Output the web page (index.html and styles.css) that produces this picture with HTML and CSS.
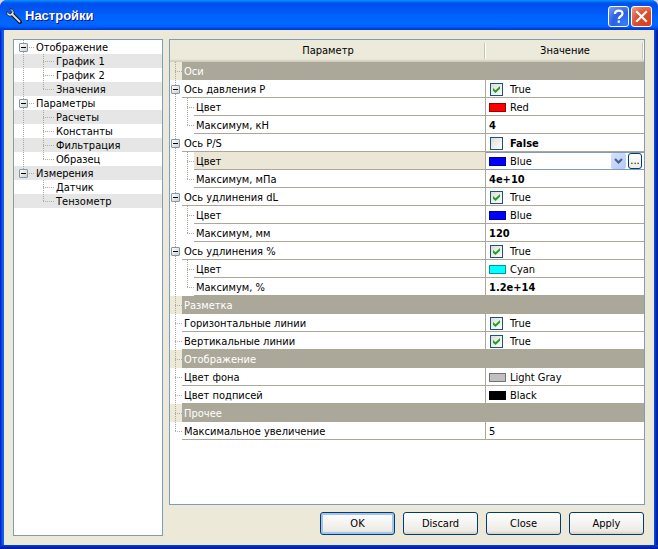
FILE: index.html
```html
<!DOCTYPE html>
<html lang="ru">
<head>
<meta charset="utf-8">
<title>Настройки</title>
<link rel="stylesheet" href="styles.css">
</head>
<body>
<div class="window">
  <header class="titlebar">
    <svg class="wrench" width="16" height="16" viewBox="0 0 16 16" aria-hidden="true">
      <path d="M6 6l8 8" stroke="#10182c" stroke-width="4" stroke-linecap="round"/>
      <path d="M3.500 1l2.500 2.500-.5 2-2 .5L1 3.500c-.6 2 .2 4 2 4.500 2 .6 4.500-1 5-3C8.300 3 6 .3 3.500 1z" fill="#f4f4ee" stroke="#10182c" stroke-width=".8"/>
      <path d="M6 6l7.500 7.500" stroke="#d8dcd8" stroke-width="1.800" stroke-linecap="round"/>
    </svg>
    <h1>Настройки</h1>
    <button class="cap help" aria-label="Справка">
      <svg width="19" height="19" viewBox="0 0 19 19"><path d="M6 7c0-4.500 7.500-4.500 7.500-.5 0 3-3.700 2.500-3.700 5.500M9.800 13.500v2.300" fill="none" stroke="#fff" stroke-width="2.200"/></svg>
    </button>
    <button class="cap close" aria-label="Закрыть">
      <svg width="19" height="19" viewBox="0 0 19 19"><path d="M5 5l9 9M14 5l-9 9" stroke="#fff" stroke-width="2.200" stroke-linecap="square"/></svg>
    </button>
  </header>
  <main class="client">
    <nav class="tree">
      <ul>
        <li><i class="g trunk"><button class="box" aria-label="Свернуть"></button></i><span>Отображение</span></li>
        <li><i class="g line"></i><i class="g tee"></i><span>График 1</span></li>
        <li><i class="g line"></i><i class="g tee"></i><span>График 2</span></li>
        <li><i class="g line"></i><i class="g end"></i><span>Значения</span></li>
        <li><i class="g trunk"><button class="box" aria-label="Свернуть"></button></i><span>Параметры</span></li>
        <li><i class="g line"></i><i class="g tee"></i><span>Расчеты</span></li>
        <li><i class="g line"></i><i class="g tee"></i><span>Константы</span></li>
        <li><i class="g line"></i><i class="g tee"></i><span>Фильтрация</span></li>
        <li><i class="g line"></i><i class="g end"></i><span>Образец</span></li>
        <li><i class="g end"><button class="box" aria-label="Свернуть"></button></i><span>Измерения</span></li>
        <li><i class="g"></i><i class="g tee"></i><span>Датчик</span></li>
        <li><i class="g"></i><i class="g end"></i><span>Тензометр</span></li>
      </ul>
    </nav>
    <section class="side">
      <div class="panel">
        <table>
          <colgroup><col class="c1"><col class="c2"></colgroup>
          <thead><tr><th>Параметр</th><th>Значение</th></tr></thead>
          <tbody>
            <tr class="group"><td colspan="2"><div class="cell"><i class="g tee"></i><span>Оси</span></div></td></tr>
            <tr><td><div class="cell"><i class="g line"><button class="box" aria-label="Свернуть"></button></i><span>Ось давления P</span></div></td><td><label class="val"><input type="checkbox" checked>True</label></td></tr>
            <tr><td><div class="cell"><i class="g line"></i><i class="g tee"></i><span>Цвет</span></div></td><td><div class="val"><i class="sw red"></i>Red</div></td></tr>
            <tr><td><div class="cell"><i class="g line"></i><i class="g end"></i><span>Максимум, кН</span></div></td><td><div class="val"><b>4</b></div></td></tr>
            <tr><td><div class="cell"><i class="g line"><button class="box" aria-label="Свернуть"></button></i><span>Ось P/S</span></div></td><td><label class="val"><input type="checkbox"><b>False</b></label></td></tr>
            <tr class="current"><td><div class="cell"><i class="g line"></i><i class="g tee"></i><span>Цвет</span></div></td><td><div class="val edit"><i class="sw blue"></i><select aria-label="Цвет"><option>Blue</option></select><svg class="arrow" width="15" height="16" viewBox="0 0 15 16" aria-hidden="true"><path d="M4 6l3.500 3.500L11 6" fill="none" stroke="#4d6185" stroke-width="2.200"/></svg><button class="more">...</button></div></td></tr>
            <tr><td><div class="cell"><i class="g line"></i><i class="g end"></i><span>Максимум, мПа</span></div></td><td><div class="val"><b>4e+10</b></div></td></tr>
            <tr><td><div class="cell"><i class="g line"><button class="box" aria-label="Свернуть"></button></i><span>Ось удлинения dL</span></div></td><td><label class="val"><input type="checkbox" checked>True</label></td></tr>
            <tr><td><div class="cell"><i class="g line"></i><i class="g tee"></i><span>Цвет</span></div></td><td><div class="val"><i class="sw blue"></i>Blue</div></td></tr>
            <tr><td><div class="cell"><i class="g line"></i><i class="g end"></i><span>Максимум, мм</span></div></td><td><div class="val"><b>120</b></div></td></tr>
            <tr><td><div class="cell"><i class="g line"><button class="box" aria-label="Свернуть"></button></i><span>Ось удлинения %</span></div></td><td><label class="val"><input type="checkbox" checked>True</label></td></tr>
            <tr><td><div class="cell"><i class="g line"></i><i class="g tee"></i><span>Цвет</span></div></td><td><div class="val"><i class="sw cyan"></i>Cyan</div></td></tr>
            <tr><td><div class="cell"><i class="g line"></i><i class="g end"></i><span>Максимум, %</span></div></td><td><div class="val"><b>1.2e+14</b></div></td></tr>
            <tr class="group"><td colspan="2"><div class="cell"><i class="g tee"></i><span>Разметка</span></div></td></tr>
            <tr><td><div class="cell"><i class="g tee"></i><span>Горизонтальные линии</span></div></td><td><label class="val"><input type="checkbox" checked>True</label></td></tr>
            <tr><td><div class="cell"><i class="g tee"></i><span>Вертикальные линии</span></div></td><td><label class="val"><input type="checkbox" checked>True</label></td></tr>
            <tr class="group"><td colspan="2"><div class="cell"><i class="g tee"></i><span>Отображение</span></div></td></tr>
            <tr><td><div class="cell"><i class="g tee"></i><span>Цвет фона</span></div></td><td><div class="val"><i class="sw gray"></i>Light Gray</div></td></tr>
            <tr><td><div class="cell"><i class="g tee"></i><span>Цвет подписей</span></div></td><td><div class="val"><i class="sw black"></i>Black</div></td></tr>
            <tr class="group"><td colspan="2"><div class="cell"><i class="g tee"></i><span>Прочее</span></div></td></tr>
            <tr><td><div class="cell"><i class="g end"></i><span>Максимальное увеличение</span></div></td><td><div class="val">5</div></td></tr>
          </tbody>
        </table>
      </div>
      <footer class="actions">
        <button class="btn default">OK</button>
        <button class="btn">Discard</button>
        <button class="btn">Close</button>
        <button class="btn">Apply</button>
      </footer>
    </section>
  </main>
</div>
</body>
</html>
```
FILE: styles.css
```css
* { box-sizing: border-box; }

body {
  margin: 0;
  background: #d8d4e4;
  color: #000;
  font: 11px/14px "DejaVu Sans Condensed", "Noto Sans", sans-serif;
}

button, select, input { font: inherit; color: inherit; margin: 0; padding: 0; }

.window {
  display: flex;
  flex-direction: column;
  min-height: 100vh;
  border-radius: 7px 7px 0 0;
  overflow: hidden;
  background:
    linear-gradient(#0841d8, #001ea0 3px) bottom / 100% 4px no-repeat,
    linear-gradient(90deg, #0019cf, #0831d9 1px, #166aee 3px, #0855dd 4px, #0855dd calc(100% - 4px), #0841d8 calc(100% - 3px), #001ea0 calc(100% - 1px));
}

.titlebar {
  display: flex;
  align-items: center;
  gap: 2px;
  height: 30px;
  padding: 2px 6px 0;
  background: linear-gradient(#0997ff, #0053ee 3px, #0050ee 5px, #0066ff 20px, #0066ff 25px, #005bff 27px, #003dd7 29px, #003dd7);
}

.titlebar h1 {
  flex: 1;
  margin: 0 0 0 1px;
  color: #fff;
  font: bold 13px/18px "Liberation Sans", Arial, sans-serif;
  text-shadow: 1px 1px 0 #0f1089;
}

.cap {
  width: 21px;
  height: 21px;
  border: 1px solid #fff;
  border-radius: 3px;
}
.cap svg { display: block; }
.help { background: radial-gradient(circle at 80% 90%, #3a7cff, #2a5fe0 50%, #7ba0f4); }
.close { background: radial-gradient(circle at 80% 90%, #e0401a, #dc4a28 50%, #f0a08a); }

.client {
  flex: 1;
  display: flex;
  gap: 6px;
  margin: 0 4px 4px;
  padding: 9px;
  background: #ece9d8;
}

.tree, .panel { border: 1px solid #7f9db9; background: #fff; }
.tree { flex: none; width: 150px; }
.tree ul { margin: 0; padding: 0; list-style: none; }
.tree li { display: flex; height: 14px; line-height: 16px; }
.tree li:nth-child(even) { background: #e6e6e6; }
.tree span { padding-left: 2px; }

/* Dotted connector lines of both trees */
.g {
  --x: 5px;
  --y: 9px;
  --v: repeating-linear-gradient(#a8a898 0 1px, transparent 1px 2px);
  --h: repeating-linear-gradient(90deg, #b0b0a4 0 1px, transparent 1px 2px);
  flex: none;
  display: flex;
  align-items: center;
  width: 12px;
  padding-left: 1px;
  background-repeat: no-repeat;
  font-style: normal;
}
.tree .g { --x: 9px; --y: 7px; width: 20px; padding-left: 5px; }
.line { background-image: var(--v); background-size: 1px 100%; background-position: var(--x) 0; }
.tee, .trunk {
  background-image: var(--v), var(--h);
  background-size: 1px 100%, 100% 1px;
  background-position: var(--x) 0, var(--x) var(--y);
}
.end {
  background-image: var(--v), var(--h);
  background-size: 1px var(--y), 100% 1px;
  background-position: var(--x) 0, var(--x) var(--y);
}

.box {
  width: 9px;
  height: 9px;
  border: 1px solid #7898b5;
  border-radius: 1px;
  background:
    linear-gradient(#000, #000) center / 5px 1px no-repeat,
    linear-gradient(135deg, #fff, #d4cfc0);
}

.side { flex: 1; min-width: 0; display: flex; flex-direction: column; gap: 7px; padding-bottom: 1px; }
.panel { flex: 1; }

table { width: 100%; border-collapse: collapse; table-layout: fixed; }
.c1 { width: 66.667%; }
td, th { padding: 0; }
th {
  height: 22px;
  background: linear-gradient(90deg, #c8c4b2 1px, #fff 1px 2px) right 0 top 3px / 2px 16px no-repeat,
    linear-gradient(#ebeadb 19px, #e2decd 20px, #d6d2c2 21px, #cbc7b8);
  font-weight: normal;
}

.cell { display: flex; height: 18px; line-height: 19px; }
.cell span { flex: 1; padding-left: 2px; border-bottom: 1px solid #aca899; }
tr:not(.group) .cell { border-right: 1px solid #aca899; }
.group .g { background-color: #ece9d8; }
.group span { background: #aca899; color: #fff; }
.current span { background: #ece6d6; }

.val {
  display: flex;
  align-items: center;
  height: 18px;
  padding: 2px 0 0 3px;
  border-bottom: 1px solid #aca899;
  line-height: 15px;
}

.sw { width: 17px; height: 9px; margin-right: 4px; border: 1px solid #0006; }
.red { background: #f00; }
.blue { background: #00f; }
.cyan { background: #0ff; }
.gray { background: #c0c0c0; }
.black { background: #000; }

input[type="checkbox"] {
  appearance: none;
  width: 13px;
  height: 13px;
  margin: 0 7px 0 1px;
  border: 1px solid #1c5180;
  background: linear-gradient(135deg, #dcdcd7, #fff);
}
input[type="checkbox"]:checked::before {
  content: "";
  display: block;
  width: 7px;
  height: 7px;
  margin: 2px;
  background: #21a121;
  clip-path: polygon(0 29%, 36% 62%, 100% 0, 100% 40%, 36% 100%, 0 68%);
}

.edit { padding: 0 2px 0 3px; border: 1px solid #7f9db9; border-width: 1px 0; }
.edit select { flex: 1; min-width: 0; height: 16px; appearance: none; border: 0; background: none; }
.arrow { flex: none; border-radius: 2px; background: linear-gradient(135deg, #d6e2fd, #b4c8f6); pointer-events: none; }
.more {
  flex: none;
  width: 14px;
  height: 16px;
  margin-left: 2px;
  border: 1px solid #003c74;
  border-radius: 3px;
  background: linear-gradient(#fff, #ecebe5);
  line-height: 12px;
}

.actions { display: flex; justify-content: flex-end; gap: 8px; padding-right: 1px; }
.btn {
  width: 75px;
  height: 23px;
  border: 1px solid #003c74;
  border-radius: 3px;
  background: linear-gradient(#fff, #ecebe5 85%, #d6d0c5);
}
.default { box-shadow: inset 0 0 0 2px #a5c3f0; }
```
